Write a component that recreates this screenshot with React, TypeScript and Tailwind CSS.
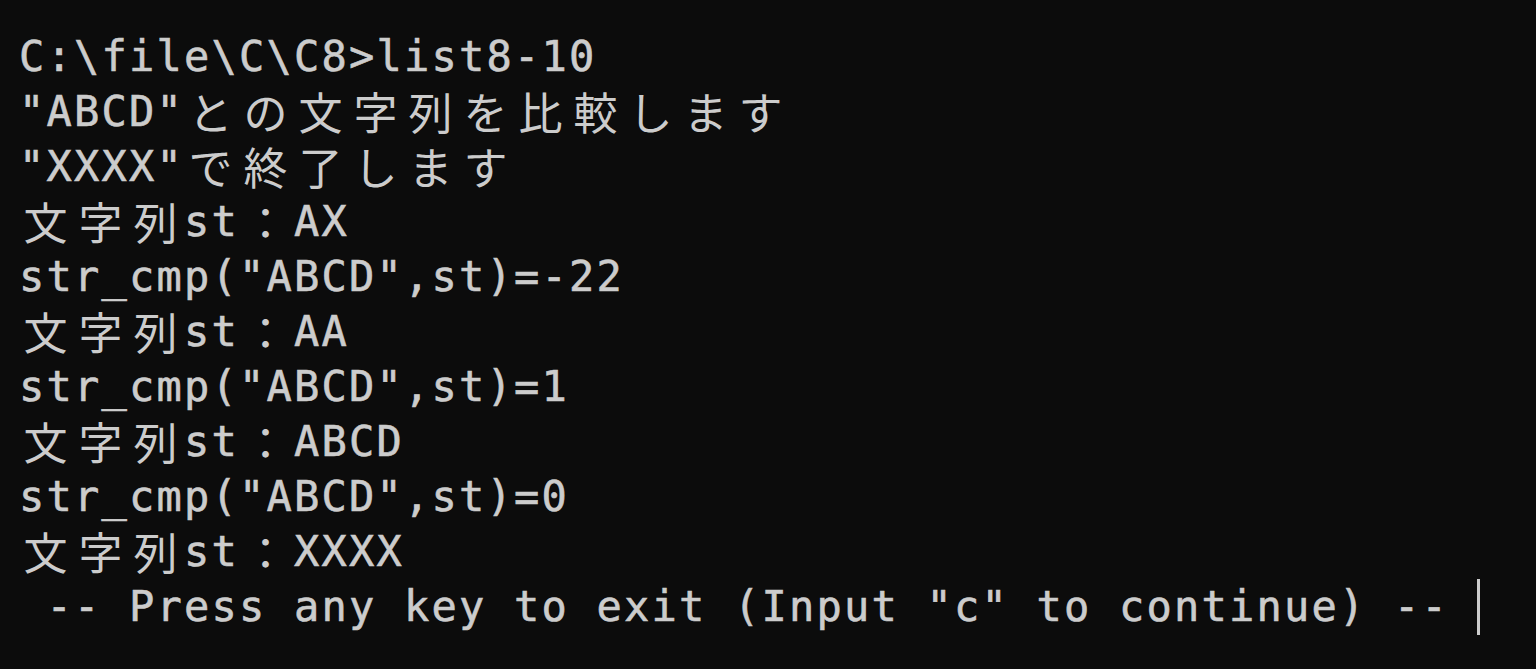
import React from 'react';

const lines: string[] = [
  'C:\\file\\C\\C8>list8-10',
  '"ABCD"との文字列を比較します',
  '"XXXX"で終了します',
  '文字列st：AX',
  'str_cmp("ABCD",st)=-22',
  '文字列st：AA',
  'str_cmp("ABCD",st)=1',
  '文字列st：ABCD',
  'str_cmp("ABCD",st)=0',
  '文字列st：XXXX',
  ' -- Press any key to exit (Input "c" to continue) -- ',
];

// full-width glyphs take two terminal cells
const isWide = (ch: string) => ch.charCodeAt(0) > 0x2e80;

function Line({ text, cursor }: { text: string; cursor?: boolean }) {
  return (
    <div className="flex h-[55px] items-center whitespace-pre">
      {Array.from(text).map((ch, i) =>
        isWide(ch) ? (
          <span
            key={i}
            className="inline-block w-[55px] shrink-0 text-center text-[44px] leading-[55px] font-['Noto_Sans_CJK_JP',sans-serif]"
          >
            {ch}
          </span>
        ) : (
          <span
            key={i}
            className="inline-block w-[27.5px] shrink-0 text-center text-[42px] leading-[55px] [-webkit-text-stroke:0.6px_#cccccc]"
          >
            {ch}
          </span>
        ),
      )}
      {cursor ? <span className="ml-[1px] inline-block h-[56px] w-[3px] shrink-0 bg-[#cccccc]" /> : null}
    </div>
  );
}

export default function App() {
  return (
    <div className="h-[669px] w-[1536px] overflow-hidden bg-[#0c0c0c] pl-[18px] pt-[29px] text-[#cccccc] font-['DejaVu_Sans_Mono','Noto_Sans_CJK_JP',monospace]">
      {lines.map((l, i) => (
        <Line key={i} text={l} cursor={i === lines.length - 1} />
      ))}
    </div>
  );
}
